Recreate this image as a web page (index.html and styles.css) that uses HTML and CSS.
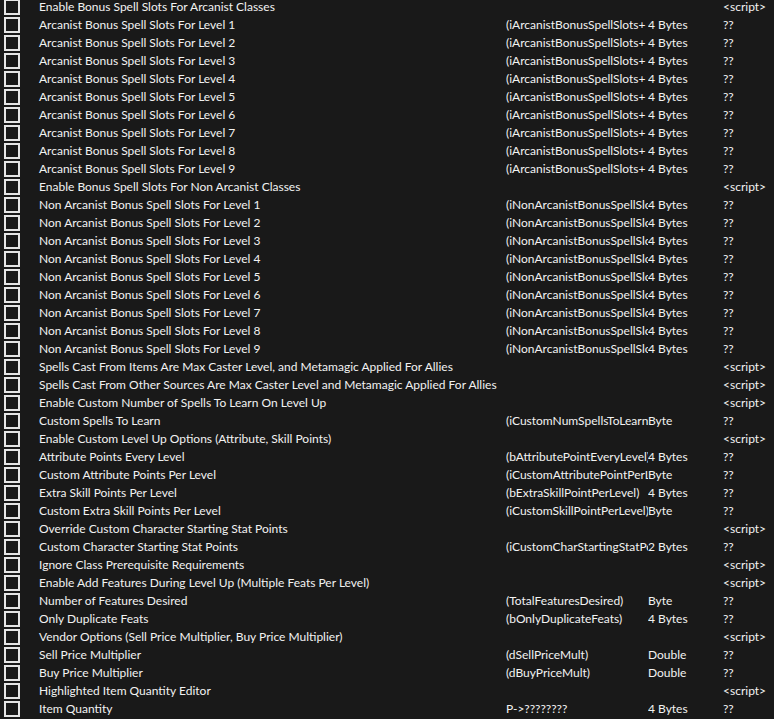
FILE: index.html
```html
<!DOCTYPE html>
<html lang="en">
  <head>
    <meta charset="UTF-8" />
    <title>Cheat Table</title>
    <link rel="stylesheet" href="styles.css">
  </head>
  <body>
    <div class="table" id="table"></div>
    <script>
      const rows = [
        ["Enable Bonus Spell Slots For Arcanist Classes", "", "", "<script>"],
        ["Arcanist Bonus Spell Slots For Level 1", "(iArcanistBonusSpellSlots+", "4 Bytes", "??"],
        ["Arcanist Bonus Spell Slots For Level 2", "(iArcanistBonusSpellSlots+", "4 Bytes", "??"],
        ["Arcanist Bonus Spell Slots For Level 3", "(iArcanistBonusSpellSlots+", "4 Bytes", "??"],
        ["Arcanist Bonus Spell Slots For Level 4", "(iArcanistBonusSpellSlots+", "4 Bytes", "??"],
        ["Arcanist Bonus Spell Slots For Level 5", "(iArcanistBonusSpellSlots+", "4 Bytes", "??"],
        ["Arcanist Bonus Spell Slots For Level 6", "(iArcanistBonusSpellSlots+", "4 Bytes", "??"],
        ["Arcanist Bonus Spell Slots For Level 7", "(iArcanistBonusSpellSlots+", "4 Bytes", "??"],
        ["Arcanist Bonus Spell Slots For Level 8", "(iArcanistBonusSpellSlots+", "4 Bytes", "??"],
        ["Arcanist Bonus Spell Slots For Level 9", "(iArcanistBonusSpellSlots+", "4 Bytes", "??"],
        ["Enable Bonus Spell Slots For Non Arcanist Classes", "", "", "<script>"],
        ["Non Arcanist Bonus Spell Slots For Level 1", "(iNonArcanistBonusSpellSlots", "4 Bytes", "??"],
        ["Non Arcanist Bonus Spell Slots For Level 2", "(iNonArcanistBonusSpellSlots", "4 Bytes", "??"],
        ["Non Arcanist Bonus Spell Slots For Level 3", "(iNonArcanistBonusSpellSlots", "4 Bytes", "??"],
        ["Non Arcanist Bonus Spell Slots For Level 4", "(iNonArcanistBonusSpellSlots", "4 Bytes", "??"],
        ["Non Arcanist Bonus Spell Slots For Level 5", "(iNonArcanistBonusSpellSlots", "4 Bytes", "??"],
        ["Non Arcanist Bonus Spell Slots For Level 6", "(iNonArcanistBonusSpellSlots", "4 Bytes", "??"],
        ["Non Arcanist Bonus Spell Slots For Level 7", "(iNonArcanistBonusSpellSlots", "4 Bytes", "??"],
        ["Non Arcanist Bonus Spell Slots For Level 8", "(iNonArcanistBonusSpellSlots", "4 Bytes", "??"],
        ["Non Arcanist Bonus Spell Slots For Level 9", "(iNonArcanistBonusSpellSlots", "4 Bytes", "??"],
        ["Spells Cast From Items Are Max Caster Level, and Metamagic Applied For Allies", "", "", "<script>"],
        ["Spells Cast From Other Sources Are Max Caster Level and Metamagic Applied For Allies", "", "", "<script>"],
        ["Enable Custom Number of Spells To Learn On Level Up", "", "", "<script>"],
        ["Custom Spells To Learn", "(iCustomNumSpellsToLearn)", "Byte", "??"],
        ["Enable Custom Level Up Options (Attribute, Skill Points)", "", "", "<script>"],
        ["Attribute Points Every Level", "(bAttributePointEveryLevel)", "4 Bytes", "??"],
        ["Custom Attribute Points Per Level", "(iCustomAttributePointPerLevel)", "Byte", "??"],
        ["Extra Skill Points Per Level", "(bExtraSkillPointPerLevel)", "4 Bytes", "??"],
        ["Custom Extra Skill Points Per Level", "(iCustomSkillPointPerLevel)", "Byte", "??"],
        ["Override Custom Character Starting Stat Points", "", "", "<script>"],
        ["Custom Character Starting Stat Points", "(iCustomCharStartingStatPoints)", "2 Bytes", "??"],
        ["Ignore Class Prerequisite Requirements", "", "", "<script>"],
        ["Enable Add Features During Level Up (Multiple Feats Per Level)", "", "", "<script>"],
        ["Number of Features Desired", "(TotalFeaturesDesired)", "Byte", "??"],
        ["Only Duplicate Feats", "(bOnlyDuplicateFeats)", "4 Bytes", "??"],
        ["Vendor Options (Sell Price Multiplier, Buy Price Multiplier)", "", "", "<script>"],
        ["Sell Price Multiplier", "(dSellPriceMult)", "Double", "??"],
        ["Buy Price Multiplier", "(dBuyPriceMult)", "Double", "??"],
        ["Highlighted Item Quantity Editor", "", "", "<script>"],
        ["Item Quantity", "P->????????", "4 Bytes", "??"]
      ];

      const table = document.getElementById("table");
      for (const [desc, addr, type, value] of rows) {
        const row = document.createElement("div");
        row.className = "row";
        row.innerHTML = `
          <span class="check"></span>
          <span class="desc"></span>
          <span class="addr"></span>
          <span class="type"></span>
          <span class="value"></span>`;
        row.querySelector(".desc").textContent = desc;
        row.querySelector(".addr").textContent = addr;
        row.querySelector(".type").textContent = type;
        row.querySelector(".value").textContent = value;
        table.appendChild(row);
      }
    </script>
  </body>
</html>
```
FILE: styles.css
```css
html,
body {
  margin: 0;
  background: #191919;
  height: 100%;
  overflow: hidden;
}
body {
  font-family: Lato, "Noto Sans", sans-serif;
  font-size: 12px;
  color: #f2f2f2;
}
.table {
  margin-top: -2px;
}
.row {
  display: grid;
  grid-template-columns: 24px 478px 142px 75px 51px;
  align-items: center;
  height: 18px;
  line-height: 18px;
  padding-left: 4px;
  white-space: nowrap;
}
.row span {
  overflow: hidden;
}
.check {
  width: 12px;
  height: 12px;
  border: 2px solid #e6e6e6;
}
.desc {
  padding-left: 11px;
}
```
